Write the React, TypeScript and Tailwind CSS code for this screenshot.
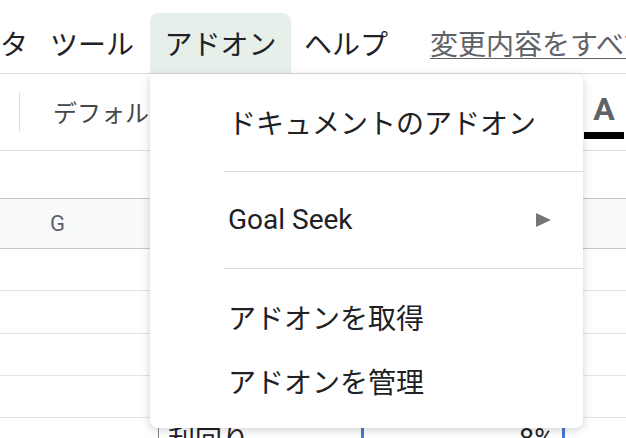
import React from 'react';

const jp = { fontFamily: '"Noto Sans CJK JP", "Noto Sans", sans-serif' };
const latin = { fontFamily: 'Roboto, "Noto Sans CJK JP", sans-serif' };

const menuItems = ['ドキュメントのアドオン', 'Goal Seek', 'アドオンを取得', 'アドオンを管理'];

const Separator: React.FC = () => (
  <div className="ml-[74px] h-px bg-[#dadce0]" />
);

const MenuItem: React.FC<{ label: string; submenu?: boolean }> = ({ label, submenu }) => (
  <div className="flex h-[64px] items-center pl-[78px] pr-[32px] text-[28px] text-[#202124]" style={label === 'Goal Seek' ? latin : jp}>
    <span className="flex-1 whitespace-nowrap">{label}</span>
    {submenu && (
      <svg width="15" height="14" viewBox="0 0 15 14">
        <path d="M0 0 L15 7 L0 14 Z" fill="#757575" />
      </svg>
    )}
  </div>
);

export default function App() {
  return (
    <div className="relative h-[438px] w-[626px] overflow-hidden bg-white" style={jp}>
      {/* Menu bar */}
      <div className="flex h-[74px] items-end border-b border-[#dadce0] text-[28px] text-[#202124]">
        <div className="flex h-[60px] items-center whitespace-nowrap">
          <span>タ</span>
          <span className="ml-[22px]">ツール</span>
          <span className="ml-[16px] flex h-[60px] w-[141px] items-center justify-center rounded-t-[8px] bg-[#e6efe9]">アドオン</span>
          <span className="ml-[13px]">ヘルプ</span>
          <span className="ml-[42px] text-[28px] text-[#5f6368] underline decoration-1 underline-offset-[3px]">変更内容をすべて表示</span>
        </div>
      </div>

      {/* Toolbar */}
      <div className="flex h-[77px] items-center border-b border-[#dadce0]">
        <div className="ml-[19px] h-[40px] w-px bg-[#dadce0]" />
        <span className="ml-[33px] whitespace-nowrap text-[24px] text-[#444746]">デフォルト</span>
        <div className="ml-auto mr-[2px] flex w-[40px] flex-col items-center pt-[8px]">
          <span className="text-[32px] font-bold leading-none text-[#5f6368]" style={latin}>A</span>
          <div className="mt-[7px] h-[7px] w-[40px] bg-black" />
        </div>
      </div>

      {/* Formula row */}
      <div className="h-[48px] border-b border-[#c4c7c5]" />

      {/* Column header */}
      <div className="flex h-[50px] items-center border-b border-[#c4c7c5] bg-[#f8f9fa]">
        <span className="ml-[50px] text-[22px] text-[#5f6368]" style={latin}>G</span>
      </div>

      {/* Rows */}
      <div className="h-[42px] border-b border-[#e2e3e3]" />
      <div className="h-[43px] border-b border-[#e2e3e3]" />
      <div className="h-[42px] border-b border-[#e2e3e3]" />
      <div className="h-[42px] border-b border-[#e2e3e3]" />
      <div className="flex h-[42px] items-center">
        <div className="ml-[158px] flex h-full w-[203px] items-center border-l border-[#80868b] pl-[9px] text-[27px] text-[#202124]">利回り</div>
        <div className="flex h-full w-[204px] items-center justify-end border-x-[3px] border-[#4a7bd0] pr-[8px] text-[27px] text-[#202124]" style={latin}>8%</div>
      </div>

      {/* Dropdown menu */}
      <div className="absolute left-[150px] top-[74px] h-[354px] w-[433px] rounded-[8px] rounded-tl-none bg-white pt-[16px] shadow-[0_2px_10px_rgba(0,0,0,0.18)]">
        <MenuItem label={menuItems[0]} />
        <div className="mt-[17px] mb-[16px]"><Separator /></div>
        <MenuItem label={menuItems[1]} submenu />
        <div className="mt-[16px] mb-[16px]"><Separator /></div>
        <MenuItem label={menuItems[2]} />
        <MenuItem label={menuItems[3]} />
      </div>
    </div>
  );
}
